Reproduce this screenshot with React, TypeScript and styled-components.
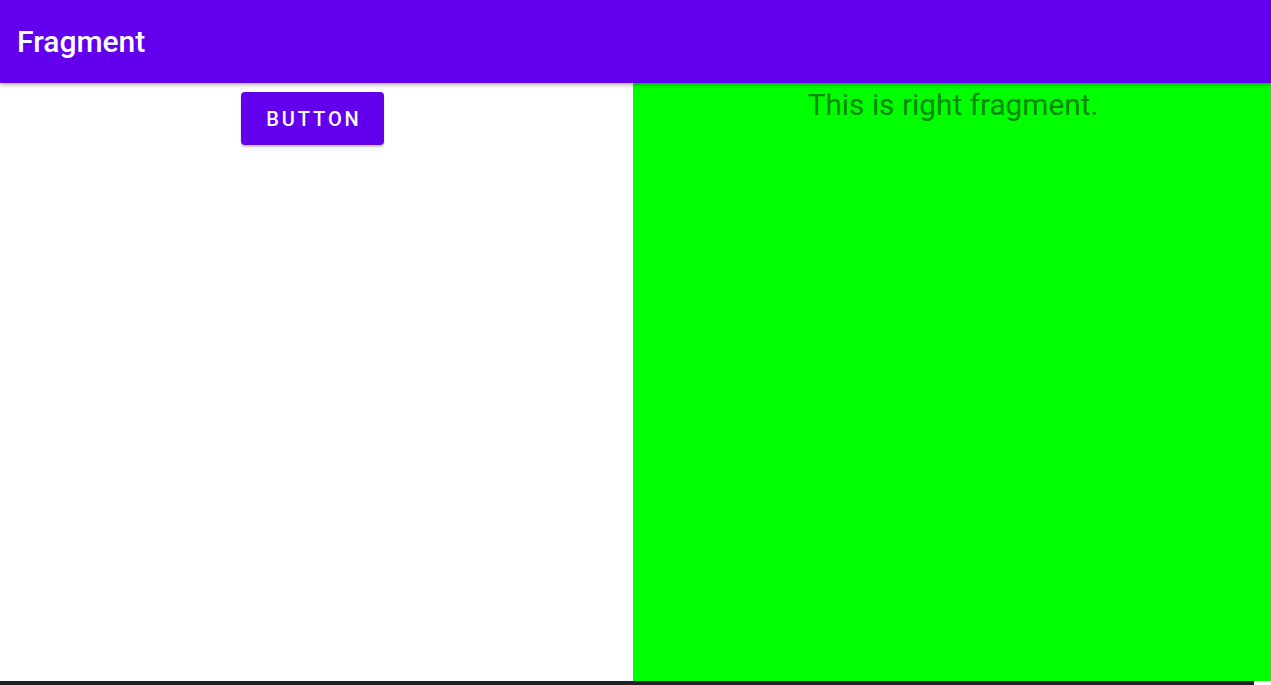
import styled, { createGlobalStyle } from 'styled-components'

const GlobalStyle = createGlobalStyle`
  html, body {
    margin: 0;
    padding: 0;
    height: 100%;
    overflow: hidden;
    font-family: Roboto, "Liberation Sans", sans-serif;
  }
  #root {
    height: 100%;
  }
`

const Screen = styled.div`
  display: flex;
  flex-direction: column;
  width: 1271px;
  height: 685px;
`

const AppBar = styled.header`
  position: relative;
  z-index: 2;
  display: flex;
  align-items: center;
  height: 83px;
  flex-shrink: 0;
  padding: 0 17px;
  box-sizing: border-box;
  background-color: #6200ee;
  box-shadow: 0 2px 4px rgba(0, 0, 0, 0.3);
`

const Title = styled.h1`
  margin: 0;
  color: #fff;
  font-size: 30px;
  font-weight: 500;
  line-height: 34px;
`

const Content = styled.main`
  display: flex;
  flex: 1;
`

const LeftPane = styled.section`
  display: flex;
  justify-content: flex-start;
  align-items: flex-start;
  width: 633px;
  padding: 9px 0 0 241px;
  box-sizing: border-box;
  background-color: #fff;
`

const Button = styled.button`
  width: 143px;
  height: 53px;
  padding: 0 0 0 3px;
  border: none;
  border-radius: 4px;
  background-color: #6200ee;
  color: #fff;
  font-family: Roboto, "Liberation Sans", sans-serif;
  font-size: 20px;
  font-weight: 500;
  letter-spacing: 2.9px;
  text-transform: uppercase;
  box-shadow: 0 2px 2px rgba(0, 0, 0, 0.24);
`

const RightPane = styled.section`
  display: flex;
  justify-content: center;
  align-items: flex-start;
  flex: 1;
  padding-top: 4px;
  padding-left: 2px;
  background-color: #00ff00;
`

const FragmentText = styled.p`
  margin: 0;
  color: #078907;
  font-size: 29.8px;
  line-height: 36px;
`

const BottomStrip = styled.div`
  display: flex;
  height: 4px;
  flex-shrink: 0;
`

const DarkBar = styled.div`
  width: 1254px;
  background-color: #202326;
`

const WhiteTail = styled.div`
  flex: 1;
  background-color: #fff;
`

export default function App() {
  return (
    <>
      <GlobalStyle />
      <Screen>
        <AppBar>
          <Title>Fragment</Title>
        </AppBar>
        <Content>
          <LeftPane>
            <Button>Button</Button>
          </LeftPane>
          <RightPane>
            <FragmentText>This is right fragment.</FragmentText>
          </RightPane>
        </Content>
        <BottomStrip>
          <DarkBar />
          <WhiteTail />
        </BottomStrip>
      </Screen>
    </>
  )
}
